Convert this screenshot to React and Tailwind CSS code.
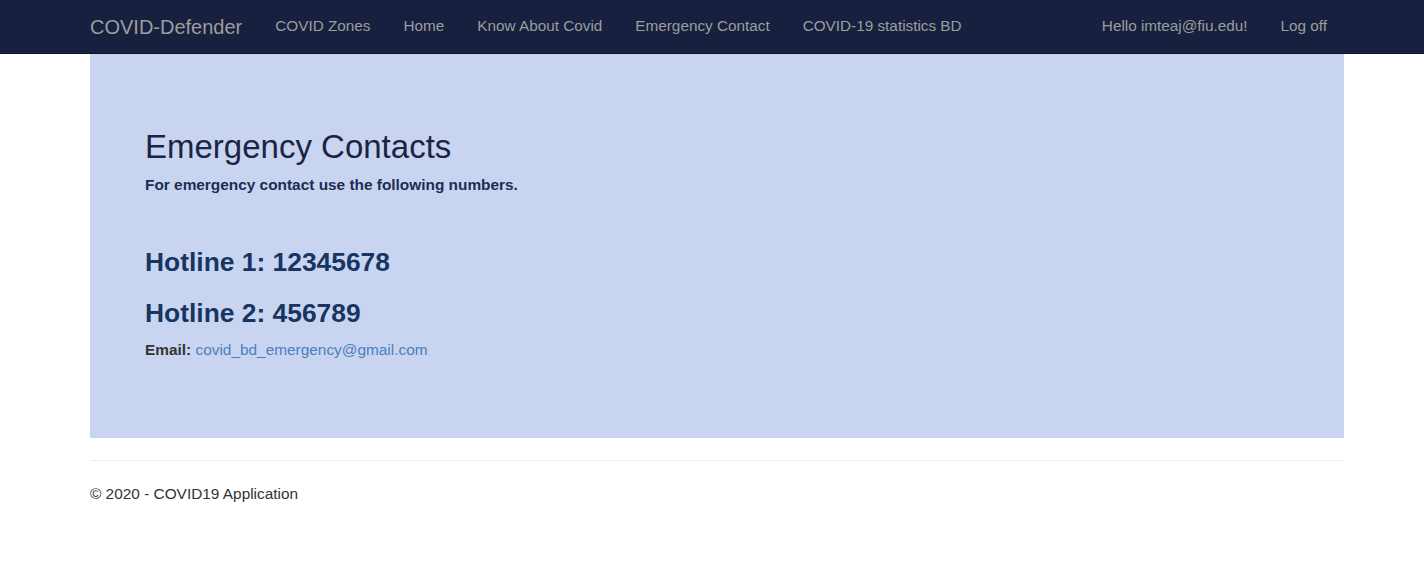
export default function App() {
  const font = { fontFamily: '"Liberation Sans", Arial, sans-serif' };
  return (
    <div style={font} className="min-h-[565px] bg-white text-[15.4px] text-[#333]">
      <nav className="h-[54px] bg-[#17213f] border-b border-[#0e1528]">
        <div className="ml-[90px] w-[1254px] h-[53px] flex items-center">
          <span className="text-[20px] text-[#9d9d9d] leading-[20px]">COVID-Defender</span>
          <div className="ml-[33px] flex items-center gap-[33px] text-[15.3px] text-[#9d9d9d]">
            <span>COVID Zones</span>
            <span>Home</span>
            <span>Know About Covid</span>
            <span>Emergency Contact</span>
            <span>COVID-19 statistics BD</span>
          </div>
          <div className="ml-auto mr-[17px] flex items-center gap-[33px] text-[15.3px] text-[#9d9d9d]">
            <span>Hello imteaj@fiu.edu!</span>
            <span>Log off</span>
          </div>
        </div>
      </nav>
      <div className="ml-[90px] w-[1254px] bg-[#c9d5f0] pt-[75px] pb-[78px] px-[55px]">
        <h1 className="text-[33px] leading-[1.1] text-[#1b2445]">Emergency Contacts</h1>
        <p className="mt-[10px] font-bold leading-[20px] text-[#1b2d55]">For emergency contact use the following numbers.</p>
        <h2 className="mt-[53px] text-[26.4px] leading-[1.1] font-bold text-[#173563]">Hotline 1: 12345678</h2>
        <h2 className="mt-[22px] text-[26.4px] leading-[1.1] font-bold text-[#173563]">Hotline 2: 456789</h2>
        <p className="mt-[12px] leading-[20px]"><b className="text-[#333]">Email:</b> <span className="text-[#4a7fc1]">covid_bd_emergency@gmail.com</span></p>
      </div>
      <div className="ml-[90px] w-[1254px]">
        <hr className="mt-[22px] border-0 border-t border-[#eee]" />
        <p className="mt-[23px] leading-[20px] text-[#333]">© 2020 - COVID19 Application</p>
      </div>
    </div>
  );
}
